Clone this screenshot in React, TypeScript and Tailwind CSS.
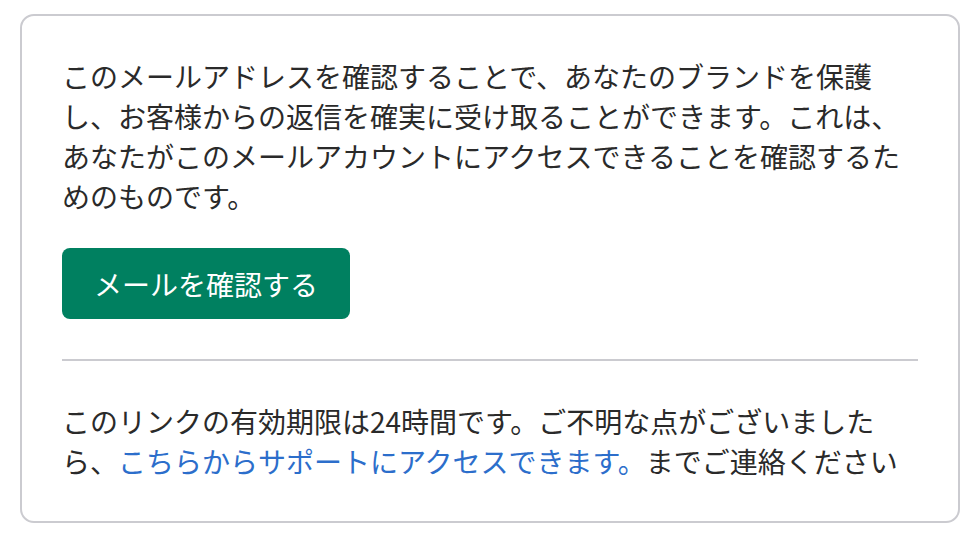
export default function App() {
    return (
        <div className="min-h-screen w-full bg-white px-5 pt-[14px] pb-4 text-[#2a2a2a]" style={{ fontFamily: '"Noto Sans CJK JP", "Noto Sans", sans-serif' }}>
            {/* Verification card */}
            <div className="w-[940px] rounded-[14px] border-2 border-[#cbcbd0] bg-white p-10">
                <p className="text-[28px] leading-[40px]">
                    このメールアドレスを確認することで、あなたのブランドを保護し、お客様からの返信を確実に受け取ることができます。これは、あなたがこのメールアカウントにアクセスできることを確認するためのものです。
                </p>

                <button
                    type="button"
                    className="mt-8 flex h-[71px] items-center justify-center rounded-lg bg-[#008060] px-8 text-[28px] leading-[40px] text-white"
                >
                    メールを確認する
                </button>

                <div className="mt-10 h-[2px] w-full bg-[#cbcbd0]" />

                <p className="mt-10 text-[28px] leading-[40px]">
                    このリンクの有効期限は24時間です。ご不明な点がございましたら、
                    <a href="#" className="text-[#2c6ecb]">こちらからサポートにアクセスできます。</a>
                    までご連絡ください
                </p>
            </div>
        </div>
    );
}
